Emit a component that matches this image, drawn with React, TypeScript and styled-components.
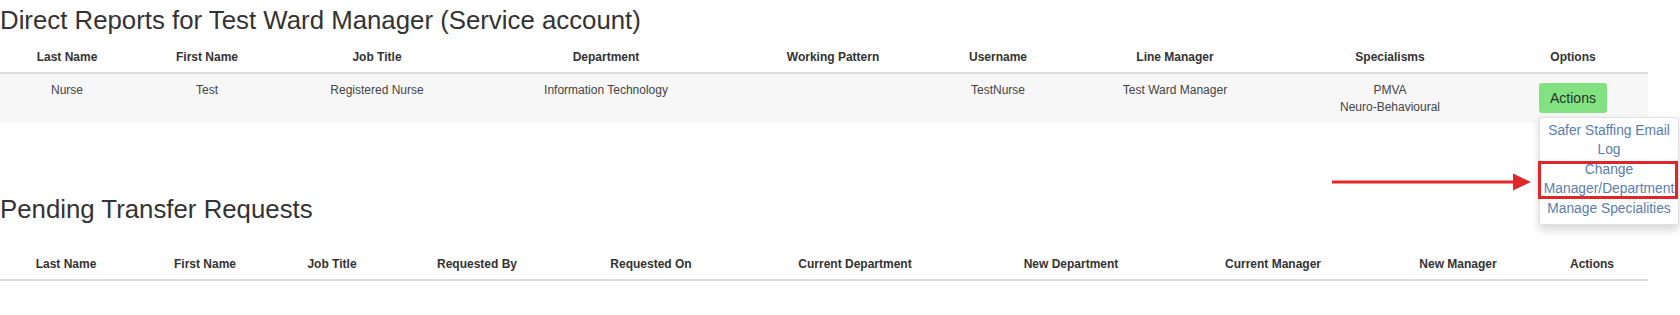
import styled, { createGlobalStyle } from "styled-components";

const GlobalStyle = createGlobalStyle`
  body {
    margin: 0;
    background: #fff;
    font-family: "Liberation Sans", Arial, sans-serif;
    color: #333;
  }
`;

const Page = styled.div`
  display: flex;
  flex-direction: column;
  padding-top: 6px;
`;

const Title = styled.h3<{ $top?: number; $gap: number }>`
  margin: ${(p) => p.$top ?? 0}px 0 ${(p) => p.$gap}px;
  font-size: 25.8px;
  font-weight: 400;
  line-height: 28.6px;
  color: #333;
`;

const Table = styled.table`
  width: 1648px;
  table-layout: fixed;
  border-collapse: collapse;
  font-size: 12px;
`;

const Col = styled.col<{ $w: number }>`
  width: ${(p) => p.$w}px;
`;

const HeadCell = styled.th`
  padding: 8px 8px 6px;
  line-height: 17px;
  font-weight: 700;
  text-align: center;
  color: #333;
  border-bottom: 2px solid #ddd;
`;

const Row = styled.tr`
  background: #f7f7f7;
`;

const Cell = styled.td`
  padding: 8px 8px 7px;
  line-height: 17px;
  text-align: center;
  vertical-align: top;
  color: #444;
`;

const Dropdown = styled.div`
  position: relative;
  display: inline-block;
  vertical-align: top;
  margin-top: 1px;
`;

const ActionButton = styled.button`
  display: block;
  height: 30px;
  padding: 0 11px;
  border: none;
  border-radius: 3px;
  background: #82e282;
  color: #263326;
  font-family: inherit;
  font-size: 14px;
  line-height: 30px;
`;

const Menu = styled.ul`
  position: absolute;
  top: calc(100% + 4px);
  left: 0;
  width: 140px;
  box-sizing: border-box;
  margin: 0;
  padding: 3px 0 6px;
  list-style: none;
  background: #fff;
  border: 1px solid rgba(0, 0, 0, 0.12);
  border-radius: 3px;
  box-shadow: 0 5px 10px rgba(0, 0, 0, 0.16);
  z-index: 2;
`;

const MenuItem = styled.li<{ $marked?: boolean }>`
  position: relative;
  padding: 0 1px;
  font-size: 13.8px;
  line-height: 19.5px;
  text-align: center;
  color: #5a7db0;

  ${(p) =>
    p.$marked &&
    `
    &::after {
      content: "";
      position: absolute;
      top: 1px;
      bottom: 0;
      left: -2px;
      right: 0;
      border: 3px solid #e2252b;
    }
  `}
`;

const Arrow = styled.svg`
  position: absolute;
  right: calc(100% + 8px);
  top: calc(50% - 7px);
`;

const directCols = [134, 146, 194, 264, 190, 140, 214, 216, 150];
const directHeads = [
  "Last Name",
  "First Name",
  "Job Title",
  "Department",
  "Working Pattern",
  "Username",
  "Line Manager",
  "Specialisms",
  "Options",
];

const pendingCols = [132, 146, 108, 182, 166, 242, 190, 214, 156, 112];
const pendingHeads = [
  "Last Name",
  "First Name",
  "Job Title",
  "Requested By",
  "Requested On",
  "Current Department",
  "New Department",
  "Current Manager",
  "New Manager",
  "Actions",
];

function RedArrow() {
  return (
    <Arrow width="200" height="20" viewBox="0 0 200 20">
      <line x1="0" y1="10" x2="184" y2="10" stroke="#e2252b" strokeWidth="3" />
      <polygon points="181,1.5 199,10 181,18.5" fill="#e2252b" />
    </Arrow>
  );
}

export default function App() {
  return (
    <Page>
      <GlobalStyle />
      <Title $gap={6}>Direct Reports for Test Ward Manager (Service account)</Title>
      <Table>
        <colgroup>
          {directCols.map((w, i) => (
            <Col key={i} $w={w} />
          ))}
        </colgroup>
        <thead>
          <tr>
            {directHeads.map((h) => (
              <HeadCell key={h}>{h}</HeadCell>
            ))}
          </tr>
        </thead>
        <tbody>
          <Row>
            <Cell>Nurse</Cell>
            <Cell>Test</Cell>
            <Cell>Registered Nurse</Cell>
            <Cell>Information Technology</Cell>
            <Cell></Cell>
            <Cell>TestNurse</Cell>
            <Cell>Test Ward Manager</Cell>
            <Cell>
              PMVA
              <br />
              Neuro-Behavioural
            </Cell>
            <Cell>
              <Dropdown>
                <ActionButton>Actions</ActionButton>
                <Menu>
                  <MenuItem>Safer Staffing Email Log</MenuItem>
                  <MenuItem $marked>
                    Change Manager/Department
                    <RedArrow />
                  </MenuItem>
                  <MenuItem>Manage Specialities</MenuItem>
                </Menu>
              </Dropdown>
            </Cell>
          </Row>
        </tbody>
      </Table>

      <Title $top={72} $gap={25}>
        Pending Transfer Requests
      </Title>
      <Table>
        <colgroup>
          {pendingCols.map((w, i) => (
            <Col key={i} $w={w} />
          ))}
        </colgroup>
        <thead>
          <tr>
            {pendingHeads.map((h) => (
              <HeadCell key={h}>{h}</HeadCell>
            ))}
          </tr>
        </thead>
      </Table>
    </Page>
  );
}
